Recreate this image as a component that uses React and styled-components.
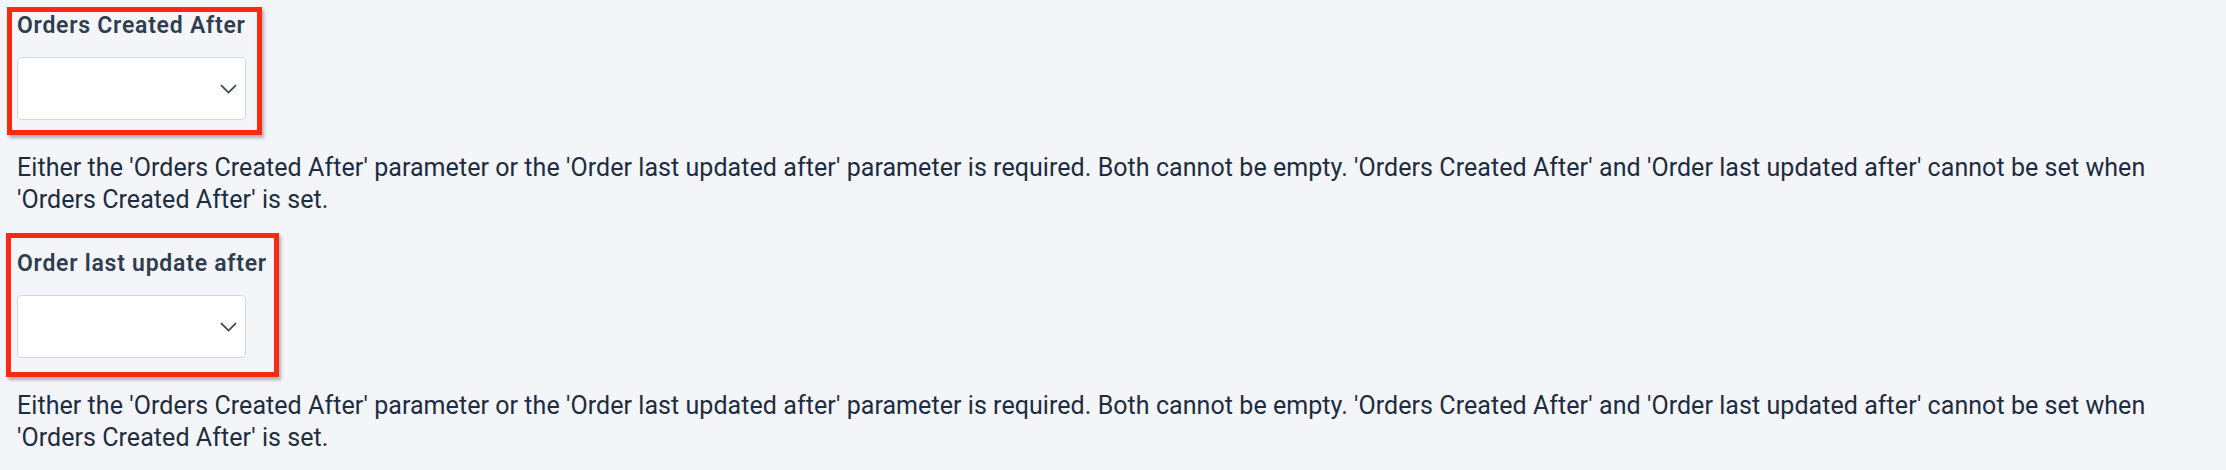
import styled, { createGlobalStyle } from "styled-components";

const GlobalStyle = createGlobalStyle`
  body {
    margin: 0;
    background: #f4f5f9;
    font-family: Roboto, "Liberation Sans", sans-serif;
  }
`;

const Page = styled.div`
  padding: 13px 17px 16px;
  display: flex;
  flex-direction: column;
  gap: 35px;
`;

const FieldGroup = styled.div`
  display: flex;
  flex-direction: column;
  gap: 32px;
`;

const FieldHead = styled.div`
  position: relative;
  align-self: flex-start;
  display: flex;
  flex-direction: column;
  gap: 18px;

  &::before {
    content: "";
    position: absolute;
    top: -${(p) => p.$mark.top}px;
    left: -${(p) => p.$mark.left}px;
    right: -${(p) => p.$mark.right}px;
    bottom: -${(p) => p.$mark.bottom}px;
    border: 5px solid #fa2a10;
    box-shadow: 2px 3px 3px rgba(40, 50, 60, 0.35);
    pointer-events: none;
  }
`;

const Label = styled.label`
  font-size: 23px;
  font-weight: 600;
  letter-spacing: 0.75px;
  color: #2e3d4f;
  line-height: 26px;
`;

const Select = styled.div`
  width: 229px;
  height: 63px;
  box-sizing: border-box;
  background: #fff;
  border: 1px solid #d3d8df;
  border-radius: 4px;
  display: flex;
  align-items: center;
  justify-content: flex-end;
  padding-right: 8px;
  color: #3c4a5c;
`;

const Help = styled.p`
  margin: 0;
  font-size: 25px;
  letter-spacing: 0.06px;
  line-height: 32px;
  color: #1d2c40;
`;

const Chevron = () => (
  <svg width="17" height="10" viewBox="0 0 17 10" fill="none">
    <path d="M1 1.2 8.5 8.6 16 1.2" stroke="currentColor" strokeWidth="1.8" />
  </svg>
);

const helpText =
  "Either the 'Orders Created After' parameter or the 'Order last updated after' parameter is required. Both cannot be empty. 'Orders Created After' and 'Order last updated after' cannot be set when 'Orders Created After' is set.";

const fields = [
  { label: "Orders Created After", mark: { top: 6, left: 10, right: 16, bottom: 15 } },
  { label: "Order last update after", mark: { top: 18, left: 11, right: 12, bottom: 19 } },
];

export default function App() {
  return (
    <>
      <GlobalStyle />
      <Page>
        {fields.map((f) => (
          <FieldGroup key={f.label}>
            <FieldHead $mark={f.mark}>
              <Label>{f.label}</Label>
              <Select>
                <Chevron />
              </Select>
            </FieldHead>
            <Help>{helpText}</Help>
          </FieldGroup>
        ))}
      </Page>
    </>
  );
}
